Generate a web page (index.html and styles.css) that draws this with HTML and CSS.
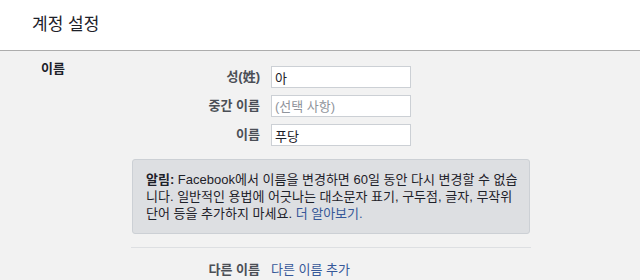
FILE: index.html
```html
<!DOCTYPE html>
<html lang="ko">
<head>
    <meta charset="UTF-8">
    <meta name="viewport" content="width=device-width, initial-scale=1.0">
    <title>계정 설정</title>
    <link rel="stylesheet" href="styles.css">
</head>
<body>
    <div class="page-header">
        <h1>계정 설정</h1>
    </div>
    <div class="section">
        <div class="section-label">이름</div>
        <div class="section-body">
            <div class="form-row">
                <label for="last">성(姓)</label>
                <input type="text" id="last" value="아">
            </div>
            <div class="form-row">
                <label for="middle">중간 이름</label>
                <input type="text" id="middle" placeholder="(선택 사항)">
            </div>
            <div class="form-row">
                <label for="first">이름</label>
                <input type="text" id="first" value="푸당">
            </div>
            <div class="notice">
                <b>알림:</b> Facebook에서 이름을 변경하면 60일 동안 다시 변경할 수 없습니다. 일반적인 용법에 어긋나는 대소문자 표기, 구두점, 글자, 무작위 단어 등을 추가하지 마세요. <a href="#">더 알아보기.</a>
            </div>
            <div class="divider"></div>
            <div class="form-row other">
                <label>다른 이름</label>
                <a href="#">다른 이름 추가</a>
            </div>
        </div>
    </div>
</body>
</html>
```

FILE: styles.css
```css
body {
    margin: 0;
    font-family: "Liberation Sans", "Noto Sans CJK KR", sans-serif;
    font-size: 13px;
    line-height: 16px;
    color: #1d2129;
    background-color: #f2f2f2;
}
.page-header {
    height: 50px;
    background-color: #fff;
    border-bottom: 1px solid #adadad;
    display: flex;
    align-items: center;
    padding-left: 32px;
}
.page-header h1 {
    margin: 0;
    font-size: 17px;
    font-weight: normal;
    line-height: 20px;
}
.section {
    display: flex;
    padding-top: 10px;
}
.section-label {
    width: 90px;
    padding-left: 41px;
    font-weight: bold;
}
.section-body {
    width: 400px;
    padding-top: 5px;
}
.form-row {
    display: flex;
    align-items: center;
    margin-bottom: 7px;
}
.form-row label {
    width: 129px;
    text-align: right;
    padding-right: 11px;
    font-weight: bold;
    color: #4b4f56;
}
.form-row input {
    width: 140px;
    height: 22px;
    box-sizing: border-box;
    margin: 0;
    padding: 0 3px;
    border: 1px solid #ccd0d5;
    font-family: inherit;
    font-size: 13px;
    color: #1d2129;
    background-color: #fff;
    outline: none;
}
.form-row input::placeholder {
    color: #90949c;
}
.notice {
    margin: 13px 0 0 1px;
    width: 398px;
    box-sizing: border-box;
    padding: 11px 10px 11px 13px;
    background-color: #dddfe2;
    border: 1px solid #ccd0d5;
    border-radius: 3px;
    line-height: 17px;
    color: #1d2129;
}
.notice b, .notice a {
    display: inline-block;
}
a {
    color: #365899;
    text-decoration: none;
}
.divider {
    height: 1px;
    background-color: #dddfe2;
    margin: 13px 0 14px;
}
.form-row.other {
    margin: 0;
}
```
